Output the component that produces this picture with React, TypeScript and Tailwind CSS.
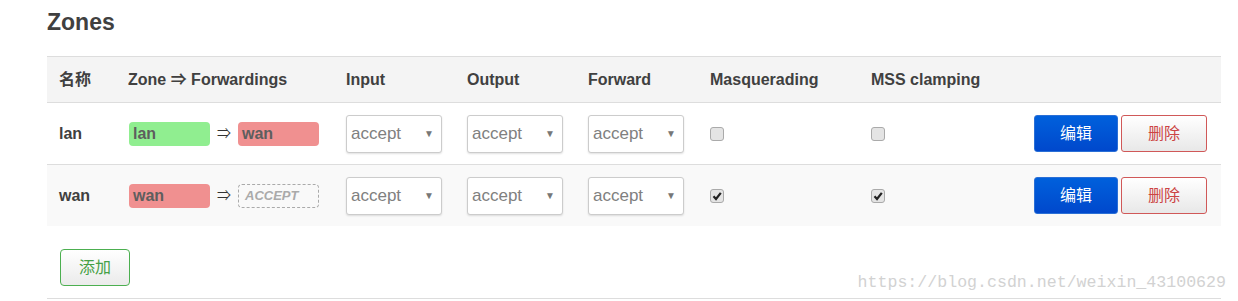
import React from "react";

const font = { fontFamily: '"Liberation Sans", Arial, "Noto Sans CJK SC", sans-serif' };

function Select() {
  return (
    <div className="w-[96px] h-[38px] border border-[#cccccc] rounded-[3px] bg-white shadow-[0_1px_2px_rgba(0,0,0,0.12)] flex items-center justify-between pl-[4px] pr-[7px]">
      <span className="text-[17px] text-[#808080] leading-none">accept</span>
      <span className="text-[10px] text-[#777] leading-none">▼</span>
    </div>
  );
}

function Check({ checked }: { checked?: boolean }) {
  return (
    <div className="w-[14px] h-[14px] rounded-[3px] border border-[#aaaaaa] bg-[#e4e4e4] flex items-center justify-center">
      {checked && (
        <svg width="10" height="10" viewBox="0 0 10 10">
          <path d="M1.5 5.3 L4 8 L8.8 1.8" stroke="#222" strokeWidth="2.2" fill="none" />
        </svg>
      )}
    </div>
  );
}

function Badge({ text, color }: { text: string; color: string }) {
  return (
    <div
      className={`w-[81px] h-[24px] rounded-[4px] pl-[4px] flex items-center text-[16px] font-bold text-[#5e5e5e] ${color}`}
    >
      {text}
    </div>
  );
}

function Actions() {
  return (
    <div className="flex items-center gap-[3px]">
      <button className="w-[84px] h-[37px] rounded-[3px] border border-[#2a6fd6] bg-gradient-to-b from-[#0060dc] to-[#0048cc] text-white text-[16px]">
        编辑
      </button>
      <button className="w-[86px] h-[37px] rounded-[3px] border border-[#d05858] bg-gradient-to-b from-[#ffffff] to-[#e8e8e8] text-[#cc4444] text-[16px]">
        删除
      </button>
    </div>
  );
}

function Row({
  name,
  bg,
  zone,
  fwd,
  checked,
  border,
}: {
  name: string;
  bg: string;
  zone: React.ReactNode;
  fwd: React.ReactNode;
  checked?: boolean;
  border?: boolean;
}) {
  return (
    <div className={`flex items-center h-[61px] ${bg} ${border ? "border-b border-[#dddddd] h-[62px]" : ""}`}>
      <div className="w-[69px] pl-3 text-[16px] font-bold text-[#404040]">{name}</div>
      <div className="w-[218px] pl-3 flex items-center">
        <div className="ml-[1px]">{zone}</div>
        <span className="mx-[7px] text-[14px] text-[#333]">⇒</span>
        {fwd}
      </div>
      <div className="w-[121px] pl-3"><Select /></div>
      <div className="w-[121px] pl-3"><Select /></div>
      <div className="w-[122px] pl-3"><Select /></div>
      <div className="w-[161px] pl-3"><Check checked={checked} /></div>
      <div className="w-[161px] pl-3"><Check checked={checked} /></div>
      <div className="flex-1 flex justify-end pr-[14px]"><Actions /></div>
    </div>
  );
}

export default function App() {
  return (
    <div className="relative w-[1238px] h-[301px] bg-white overflow-hidden" style={font}>
      <div className="pl-[47px] pt-[8px] h-[56px]">
        <h2 className="text-[23px] font-bold leading-[28px] text-[#404040]">Zones</h2>
      </div>
      <div className="ml-[47px] w-[1174px]">
        <div className="border-t border-b border-[#dddddd] bg-[#f4f4f4] h-[47px] flex items-center text-[16px] font-bold text-[#404040]">
          <div className="w-[69px] pl-3">名称</div>
          <div className="w-[218px] pl-3">Zone ⇒ Forwardings</div>
          <div className="w-[121px] pl-3">Input</div>
          <div className="w-[121px] pl-3">Output</div>
          <div className="w-[122px] pl-3">Forward</div>
          <div className="w-[161px] pl-3">Masquerading</div>
          <div className="w-[161px] pl-3">MSS clamping</div>
          <div className="flex-1" />
        </div>
        <Row
          name="lan"
          bg="bg-white"
          border
          zone={<Badge text="lan" color="bg-[#90ee90]" />}
          fwd={<Badge text="wan" color="bg-[#f09090]" />}
        />
        <Row
          name="wan"
          bg="bg-[#f9f9f9]"
          checked
          zone={<Badge text="wan" color="bg-[#f09090]" />}
          fwd={
            <div className="w-[81px] h-[24px] rounded-[4px] border border-dashed border-[#aaaaaa] pl-[6px] flex items-center text-[13px] font-bold italic text-[#aaaaaa]">
              ACCEPT
            </div>
          }
        />
        <div className="flex items-end justify-between h-[73px] border-b border-[#dddddd]">
          <button className="ml-[13px] mb-[12px] w-[70px] h-[37px] rounded-[4px] border border-[#4caf50] bg-gradient-to-b from-[#ffffff] to-[#ebebeb] text-[16px] text-[#46a046]">
            添加
          </button>
          <span
            className="mb-[6px] mr-[-5px] text-[16.6px] text-[#d2d2d2] leading-none"
            style={{ fontFamily: '"Liberation Mono", monospace' }}
          >
            https://blog.csdn.net/weixin_43100629
          </span>
        </div>
      </div>
    </div>
  );
}
